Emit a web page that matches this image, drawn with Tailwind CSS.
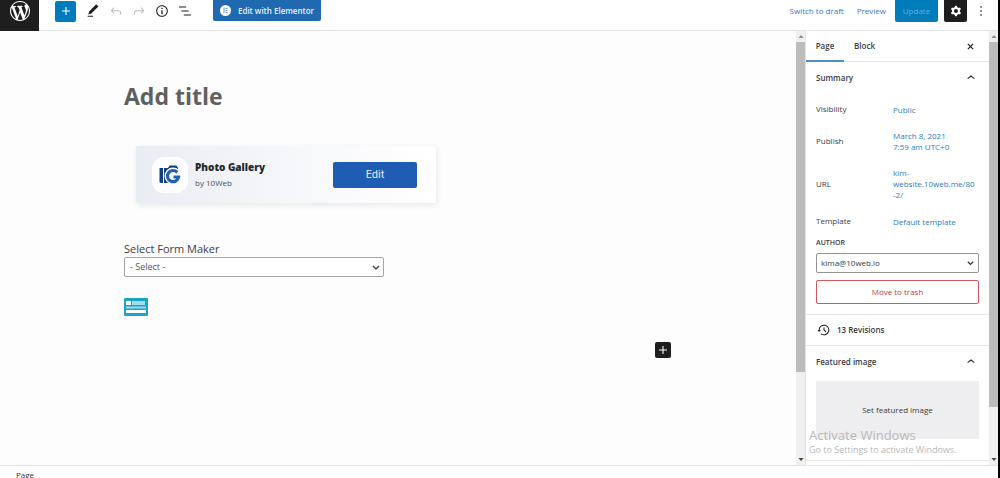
<!DOCTYPE html>
<html lang="en">
<head>
  <meta charset="UTF-8" />
  <meta name="viewport" content="width=device-width, initial-scale=1.0"/>
  <title>Edit Page</title>
  <script src="https://cdn.jsdelivr.net/npm/@tailwindcss/browser@4"></script>
</head>
<body class="flex h-screen flex-col overflow-hidden border-r-2 border-black bg-[#fdfdfd] font-['Open_Sans','Noto_Sans',sans-serif] text-[8px] leading-3 text-[#3c3c3c]">

  <!-- Top toolbar -->
  <header class="flex h-[31px] shrink-0 items-start border-b border-[#e4e4e4] bg-white">
    <a href="#" aria-label="View pages" class="flex h-[31px] w-[39px] shrink-0 justify-center bg-[#1e1e1e] pt-px text-white">
      <svg class="size-5" viewBox="0 0 20 20" fill="currentColor"><path d="M20 10c0-5.51-4.49-10-10-10C4.48 0 0 4.49 0 10c0 5.52 4.48 10 10 10 5.51 0 10-4.48 10-10zM7.78 15.37L4.37 6.22c.55-.02 1.17-.08 1.17-.08.5-.06.44-1.13-.06-1.11 0 0-1.45.11-2.37.11-.18 0-.37 0-.58-.01C4.12 2.69 6.87 1.11 10 1.11c2.33 0 4.45.87 6.05 2.34-.68-.11-1.65.39-1.65 1.58 0 .74.45 1.36.9 2.1.35.61.55 1.36.55 2.46 0 1.49-1.4 5-1.4 5l-3.03-8.37c.54-.02.82-.17.82-.17.5-.05.44-1.25-.06-1.22 0 0-1.44.12-2.38.12-.87 0-2.33-.12-2.33-.12-.5-.03-.56 1.2-.06 1.22l.92.08 1.26 3.41zM17.41 10c.24-.64.74-1.87.43-4.25.7 1.29 1.05 2.71 1.05 4.25 0 3.29-1.73 6.24-4.4 7.78.97-2.59 1.94-5.2 2.92-7.78zM6.1 18.09C3.12 16.65 1.11 13.53 1.11 10c0-1.3.23-2.48.72-3.59C3.25 10.3 4.67 14.2 6.1 18.09zm4.03-6.63l2.58 6.98c-.86.29-1.76.45-2.71.45-.79 0-1.57-.11-2.29-.33.81-2.38 1.62-4.74 2.42-7.1z"/></svg>
    </a>
    <div class="ml-4 flex h-[22px] items-center gap-[7px]">
      <button aria-label="Toggle block inserter" class="mr-[2px] flex size-[21px] items-center justify-center rounded-xs bg-[#007cba] text-white">
        <svg class="size-4" viewBox="0 0 24 24" fill="currentColor"><path d="M18 11.2h-5.2V6h-1.6v5.2H6v1.6h5.2V18h1.6v-5.2H18z"/></svg>
      </button>
      <button aria-label="Tools"><svg class="size-4" viewBox="0 0 24 24" fill="#1e1e1e"><path d="M20.1 5.1L16.900 2 6.200 12.700l-1.300 4.400 4.500-1.300L20.100 5.100zM4 20.800h8v-1.500H4v1.500z"/></svg></button>
      <button aria-label="Undo"><svg class="size-4" viewBox="0 0 24 24" fill="#bdbdbd"><path d="M18.3 11.7c-.6-.6-1.4-.9-2.3-.9H6.7l2.9-3.3-1.1-1-4.5 5L8.5 16l1-1-2.7-2.7H16c.5 0 .9.2 1.3.5 1 1 1 3.4 1 4.5v.3h1.5v-.2c0-1.5 0-4.3-1.5-5.7z"/></svg></button>
      <button aria-label="Redo"><svg class="size-4" viewBox="0 0 24 24" fill="#bdbdbd"><path d="M15.6 6.5l-1.1 1 2.9 3.3H8c-.9 0-1.7.3-2.3.9-1.4 1.5-1.4 4.2-1.4 5.6v.2h1.5v-.3c0-1.1 0-3.5 1-4.5.3-.3.7-.5 1.3-.5h9.2L14.5 15l1.1 1.1 4.6-4.6-4.6-5z"/></svg></button>
      <button aria-label="Details"><svg class="size-4" viewBox="0 0 24 24" fill="#1e1e1e"><path d="M12 3.2c-4.8 0-8.8 3.9-8.8 8.8 0 4.8 3.9 8.8 8.8 8.8 4.8 0 8.8-3.9 8.8-8.8 0-4.8-4-8.8-8.8-8.8zm0 16c-4 0-7.2-3.3-7.2-7.2C4.8 8 8 4.8 12 4.8s7.2 3.3 7.2 7.2c0 4-3.2 7.2-7.2 7.2zM11 17h2v-6h-2v6zm0-8h2V7h-2v2z"/></svg></button>
      <button aria-label="List view"><svg class="size-4" viewBox="0 0 24 24" fill="#1e1e1e"><path d="M13.8 5.2H3v1.5h10.8V5.2zm-3.6 12v1.5H21v-1.5H10.2zm7.2-6H6.6v1.5h10.8v-1.5z"/></svg></button>
    </div>
    <button class="ml-5 flex h-[21px] w-[108px] items-center justify-center gap-[7px] rounded-b-xs bg-[#2068b0] font-semibold text-[#e8f0f8]">
      <svg class="size-[11px]" viewBox="0 0 22 22"><circle cx="11" cy="11" r="11" fill="#fff"/><path d="M7 6h2v10H7zM11 6h4v2h-4zM11 10h4v2h-4zM11 14h4v2h-4z" fill="#6a9ccd"/></svg>
      Edit with Elementor
    </button>
    <div class="ml-auto flex h-[22px] items-center text-[#2b7cc0]">
      <button>Switch to draft</button>
      <button class="ml-[13px]">Preview</button>
      <button class="ml-[9px] h-full w-[43px] rounded-b-xs bg-[#007cba] text-[#62b3dc]">Update</button>
      <button aria-label="Settings" class="ml-[6px] flex h-full w-[23px] items-center justify-center rounded-b-xs bg-[#1e1e1e] text-white">
        <svg class="size-4" viewBox="0 0 24 24" fill="currentColor"><path fill-rule="evenodd" d="M10.289 4.836A1 1 0 0111.275 4h1.306a1 1 0 01.987.836l.244 1.466c.787.26 1.503.679 2.108 1.218l1.393-.522a1 1 0 011.216.437l.653 1.13a1 1 0 01-.23 1.273l-1.148.944a6.025 6.025 0 010 2.435l1.149.946a1 1 0 01.23 1.272l-.653 1.13a1 1 0 01-1.216.437l-1.394-.522c-.605.54-1.32.958-2.108 1.218l-.244 1.466a1 1 0 01-.987.836h-1.306a1 1 0 01-.986-.836l-.244-1.466a5.995 5.995 0 01-2.108-1.218l-1.394.522a1 1 0 01-1.217-.436l-.653-1.131a1 1 0 01.23-1.272l1.149-.946a6.026 6.026 0 010-2.435l-1.148-.944a1 1 0 01-.23-1.272l.653-1.131a1 1 0 011.217-.437l1.393.522a5.994 5.994 0 012.108-1.218l.244-1.466zM14.929 12a3 3 0 11-6 0 3 3 0 016 0z"/></svg>
      </button>
      <button aria-label="Options" class="mr-[9px] ml-[6px]"><svg class="size-4" viewBox="0 0 24 24" fill="#1e1e1e"><path d="M13 19h-2v-2h2v2zm0-6h-2v-2h2v2zm0-6h-2V5h2v2z"/></svg></button>
    </div>
  </header>

  <div class="flex min-h-0 flex-1">
    <!-- Editor canvas -->
    <main class="flex min-w-0 flex-1 flex-col items-start pt-[47px] pr-[125px] pl-[124px]">
      <h1 class="text-[23px] leading-9 font-bold text-[#606060]">Add title</h1>

      <section class="mt-8 ml-3 flex h-[57px] w-[300px] items-center rounded-xs bg-linear-to-r from-[#e9ecf2] via-[#f6f7fa] to-white pr-[19px] pl-4 shadow-[1px_2px_6px_rgba(0,0,0,0.09)]">
        <div class="flex size-9 items-center justify-center rounded-xl bg-white">
          <svg class="size-6" viewBox="0 0 24 24">
            <path d="M1.500 5H5V20H3a1.500 1.500 0 0 1-1.500-1.500z" fill="#123f7c"/>
            <path d="M6 5h4l1.500-2.500h7L20 5v6H12v9H6z" fill="#123f7c"/>
            <circle cx="15" cy="13" r="8.500" fill="#fff"/>
            <path d="M19.300 9.400a5.600 5.600 0 1 0 1.300 4.600H15.500" fill="none" stroke="#2062b0" stroke-width="3.200"/>
          </svg>
        </div>
        <div class="ml-[7px] flex-1">
          <h2 class="text-[10px] leading-4 font-extrabold text-[#23282d]">Photo Gallery</h2>
          <p class="text-[8px] leading-4 text-[#4c5057]">by 10Web</p>
        </div>
        <button class="h-[26px] w-[84px] rounded-xs bg-[#1f5cb4] font-['Roboto',sans-serif] text-[11px] text-[#e4ecf7]">Edit</button>
      </section>

      <label for="form-maker" class="mt-[38px] text-[11px] leading-4">Select Form Maker</label>
      <div class="relative w-[260px]">
        <select id="form-maker" class="block h-5 w-full appearance-none rounded-xs border border-[#a5a5a5] bg-white px-[5px] text-[9px] text-[#555]">
          <option>- Select -</option>
        </select>
        <svg class="pointer-events-none absolute top-[7px] right-1 size-2" viewBox="0 0 8 8" fill="none" stroke="#444" stroke-width="1.500"><path d="M1 2l3 3 3-3"/></svg>
      </div>

      <svg class="mt-[21px] h-[18px] w-6" viewBox="0 0 24 18">
        <rect width="24" height="18" rx="1" fill="#1ba3c9"/>
        <path d="M2 3h5v4H2zM2 12h20v3H2z" fill="#fff"/>
        <path d="M8 3h13v4H8zM2 8.500h20v2H2z" fill="#9fdcf0"/>
      </svg>

      <button aria-label="Add block" class="mt-[26px] flex size-4 items-center justify-center self-end rounded-xs bg-[#1e1e1e] text-white">
        <svg class="size-4" viewBox="0 0 24 24" fill="currentColor"><path d="M18 11.200h-5.200V6h-1.600v5.200H6v1.600h5.200V18h1.600v-5.200H18z"/></svg>
      </button>
    </main>

    <!-- Editor scrollbar -->
    <div class="flex w-[9px] shrink-0 flex-col items-center bg-[#f0f0f0]">
      <svg class="h-[11px] w-2 shrink-0" viewBox="0 0 8 11"><path d="M1.500 7L4 4l2.500 3z" fill="#8a8a8a"/></svg>
      <div class="h-[76%] w-full bg-[#bcbcbc]"></div>
      <svg class="mt-auto h-[11px] w-2 shrink-0" viewBox="0 0 8 11"><path d="M1.500 4L4 7l2.500-3z" fill="#444"/></svg>
    </div>

    <!-- Settings sidebar -->
    <aside class="relative flex w-[184px] shrink-0 flex-col overflow-hidden border-l border-[#e4e4e4] bg-white">
      <div class="flex h-[31px] shrink-0 border-b border-[#e4e4e4] font-semibold">
        <button class="-mb-px w-[38px] border-b-2 border-[#4a8fcb]">Page</button>
        <button class="w-[41px]">Block</button>
        <button aria-label="Close settings" class="mr-[15px] ml-auto"><svg class="size-[7px]" viewBox="0 0 8 8" stroke="#1e1e1e" stroke-width="1.400"><path d="M1 1l6 6M7 1L1 7"/></svg></button>
      </div>

      <section class="border-b border-[#e8e8e8] px-[10px] pb-[10px]">
        <button class="flex h-8 w-full items-center justify-between font-semibold">Summary
          <svg class="size-4" viewBox="0 0 24 24" fill="#1e1e1e"><path d="M6.500 12.400L12 8l5.500 4.400-.9 1.200L12 10l-4.500 3.600-1-1.200z"/></svg>
        </button>
        <dl class="mt-[9px] grid grid-cols-[77px_1fr] items-center gap-y-[15px]">
          <dt>Visibility</dt><dd class="leading-[11px]"><a href="#" class="text-[#2b7cc0]">Public</a></dd>
          <dt>Publish</dt><dd class="leading-[11px]"><a href="#" class="text-[#2b7cc0]">March 8, 2021<br>7:59 am UTC+0</a></dd>
          <dt>URL</dt><dd class="leading-[11px]"><a href="#" class="text-[#2b7cc0]">kim-<br>website.10web.me/80<br>-2/</a></dd>
          <dt>Template</dt><dd class="leading-[11px]"><a href="#" class="text-[#2b7cc0]">Default template</a></dd>
        </dl>
        <label for="author" class="mt-[10px] block text-[7px] font-semibold">AUTHOR</label>
        <div class="relative mt-1">
          <select id="author" class="block h-5 w-full appearance-none rounded-xs border border-[#949494] bg-white px-1">
            <option>kima@10web.io</option>
          </select>
          <svg class="pointer-events-none absolute top-[7px] right-[5px] size-[7px]" viewBox="0 0 8 8" fill="none" stroke="#333" stroke-width="1.500"><path d="M1 2l3 3 3-3"/></svg>
        </div>
        <button class="mt-[7px] h-6 w-full rounded-xs border border-[#d65a5a] text-[#cc4040]">Move to trash</button>
      </section>

      <button class="flex h-[31px] shrink-0 items-center gap-[5px] border-b border-[#e8e8e8] px-[10px] font-semibold">
        <svg class="size-4" viewBox="0 0 24 24" fill="#1e1e1e"><path d="M5.500 12h1.750l-2.500 3-2.500-3H4a8 8 0 113.134 6.350l.907-1.194A6.500 6.500 0 105.500 12zm9.530 1.970l-2.280-2.280V8.500a.75.75 0 00-1.500 0V12a.747.747 0 00.218.529l1.282-.84-1.280.842 2.500 2.500a.75.75 0 101.060-1.061z"/></svg>
        13 Revisions
      </button>

      <section class="shrink-0 border-b border-[#e8e8e8] px-[10px] pb-[21px]">
        <button class="flex h-8 w-full items-center justify-between font-semibold">Featured image
          <svg class="size-4" viewBox="0 0 24 24" fill="#1e1e1e"><path d="M6.500 12.400L12 8l5.500 4.400-.9 1.200L12 10l-4.500 3.600-1-1.200z"/></svg>
        </button>
        <button class="mt-[3px] h-[58px] w-full bg-[#eeeef0]">Set featured image</button>
      </section>

      <!-- Windows activation watermark -->
      <div class="pointer-events-none absolute bottom-2 left-[3px] whitespace-nowrap text-[#b8b8b8]">
        <p class="text-[13px] leading-4">Activate Windows</p>
        <p class="text-[9px] leading-[14px]">Go to Settings to activate Windows.</p>
      </div>
    </aside>

    <!-- Sidebar scrollbar -->
    <div class="flex w-[9px] shrink-0 flex-col items-center bg-[#f0f0f0]">
      <svg class="h-[11px] w-2 shrink-0" viewBox="0 0 8 11"><path d="M1.500 7L4 4l2.500 3z" fill="#8a8a8a"/></svg>
      <div class="h-[84%] w-full bg-[#bcbcbc]"></div>
      <svg class="mt-auto h-[11px] w-2 shrink-0" viewBox="0 0 8 11"><path d="M1.500 4L4 7l2.500-3z" fill="#444"/></svg>
    </div>
  </div>

  <footer class="h-[13px] shrink-0 border-t border-[#e4e4e4] bg-white pt-[3px] pl-4">Page</footer>
</body>
</html>
